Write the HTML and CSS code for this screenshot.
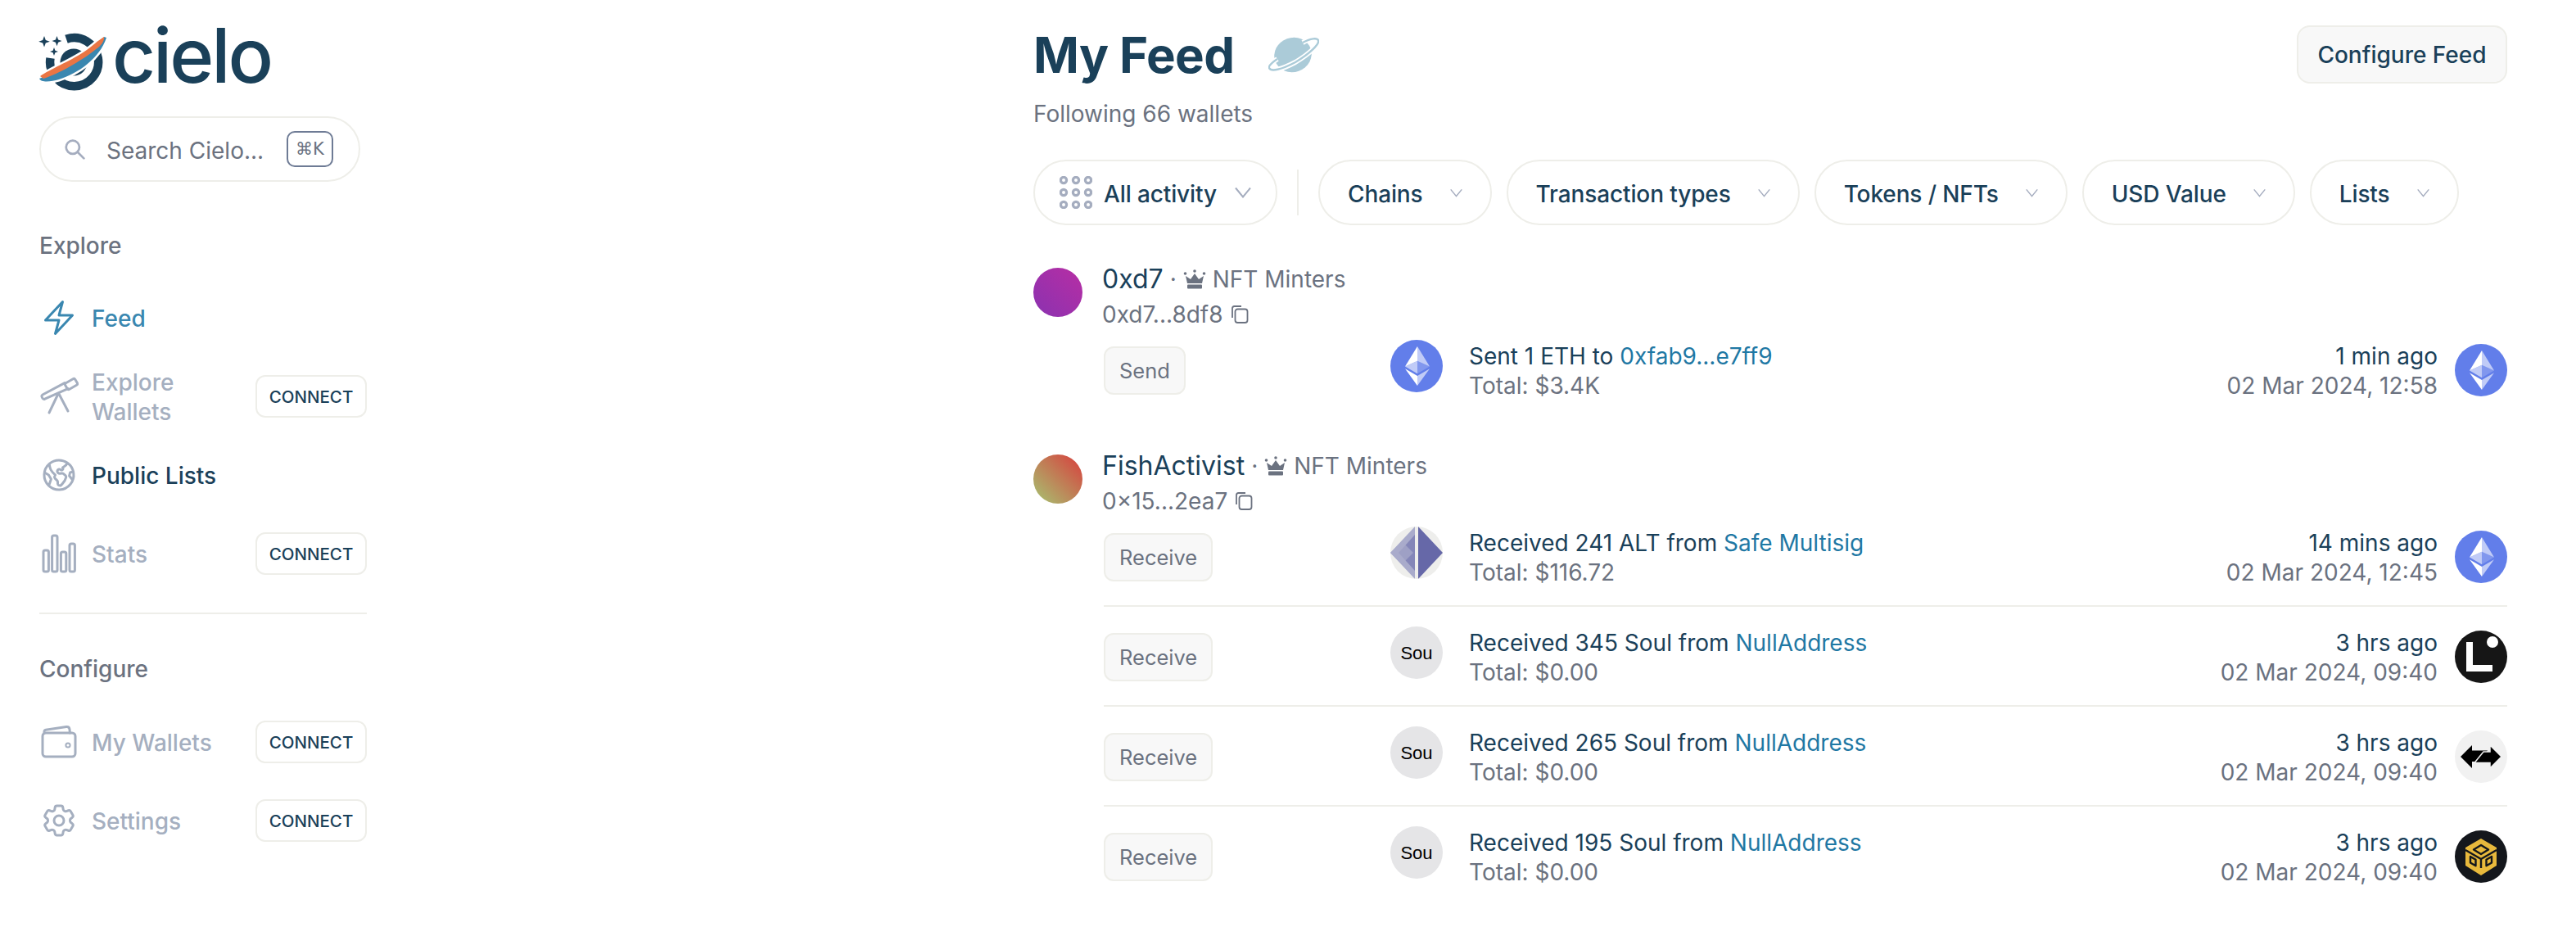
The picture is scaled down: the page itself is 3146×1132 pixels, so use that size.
FILE: index.html

```html
<!DOCTYPE html>
<html lang="en">
<head>
  <meta charset="UTF-8" />
  <title>Cielo - My Feed</title>
  <link rel="stylesheet" href="styles.css">
</head>
<body>
  <svg class="defs" width="0" height="0">
    <symbol id="eth" viewBox="0 0 32 32">
      <circle cx="16" cy="16" r="16" fill="#627eea"/>
      <path fill="#fff" fill-opacity=".6" d="M16.5 4v8.87l7.5 3.35z"/>
      <path fill="#fff" d="M16.5 4L9 16.22l7.5-3.35z"/>
      <path fill="#fff" fill-opacity=".6" d="M16.5 21.97V28L24 17.62z"/>
      <path fill="#fff" d="M16.5 28v-6.03L9 17.62z"/>
      <path fill="#fff" fill-opacity=".2" d="M16.5 20.57l7.5-4.35-7.5-3.35z"/>
      <path fill="#fff" fill-opacity=".6" d="M9 16.22l7.5 4.35v-7.7z"/>
    </symbol>
    <symbol id="chev" viewBox="0 0 20 14">
      <path d="M1 1.5l9 11 9-11" fill="none" stroke="#a5adbf" stroke-width="2"/>
    </symbol>
    <symbol id="copy" viewBox="0 0 22 22">
      <path d="M2 15V3.500Q2 1 4.500 1H13" fill="none" stroke="#6b7280" stroke-width="1.800"/>
      <rect x="5.500" y="4.500" width="15" height="16.500" rx="3" fill="none" stroke="#6b7280" stroke-width="1.800"/>
    </symbol>
    <symbol id="crown" viewBox="0 0 28 24">
      <circle cx="2.500" cy="5" r="1.800" fill="#6b7280"/>
      <circle cx="14" cy="2" r="1.800" fill="#6b7280"/>
      <circle cx="25.500" cy="5" r="1.800" fill="#6b7280"/>
      <path d="M3 8l6 4 5-7 5 7 6-4-2 9H5z" fill="#6b7280"/>
      <rect x="5" y="18.500" width="18" height="5" rx="1" fill="#6b7280"/>
    </symbol>
  </svg>

  <div class="page">
    <aside class="sidebar">
      <div class="logo">
        <svg class="logo-mark" viewBox="47 39 85 72">
          <path d="M61.500 70A29.500 29.500 0 1 0 81 46.800" fill="none" stroke="#1a4059" stroke-width="10.500"/>
          <circle cx="90" cy="75" r="16.500" fill="#1a4059"/>
          <path d="M48 95C50 100 62 99 72 96C95 89 122 70 130 45L127 44C120 48 112 56 103 62C85 74 60 84 49 92Z" fill="#fff" stroke="#fff" stroke-width="5"/>
          <path d="M48 95C50 100 62 99 72 96C95 89 122 70 130 45L127 44C118 58 90 76 53 93Z" fill="#3a87b0"/>
          <path d="M49 92C60 84 85 74 103 62C112 56 120 48 127 44C128 48 124 55 116 60C100 73 70 90 53 95Z" fill="#ea7544"/>
          <path d="M54 43l1.800 5 5 1.800-5 1.800-1.800 5-1.800-5-5-1.800 5-1.800zM69.500 43l1.600 4.500 4.400 1.600-4.400 1.600-1.600 4.500-1.600-4.500-4.400-1.600 4.400-1.600zM66 57l1.400 3.700 3.600 1.300-3.600 1.300-1.400 3.700-1.400-3.700-3.600-1.300 3.600-1.300z" fill="#1a4059"/>
        </svg>
        <span class="logo-text">cielo</span>
      </div>

      <div class="search">
        <svg class="search-icon" viewBox="0 0 24 24"><circle cx="10" cy="10" r="7.500" fill="none" stroke="#a5adbf" stroke-width="2.500"/><path d="M15.500 15.500l7 7" stroke="#a5adbf" stroke-width="2.500" stroke-linecap="round"/></svg>
        <span class="search-text">Search Cielo...</span>
        <span class="kbd">⌘K</span>
      </div>

      <div class="nav-title">Explore</div>
      <nav>
        <a class="nav-item active">
          <svg class="nav-icon" viewBox="0 0 24 24"><path d="M3.750 13.500l10.500-11.250L12 10.500h8.250L9.750 21.750 12 13.500H3.750z"/></svg>
          <span class="nav-label">Feed</span>
        </a>
        <a class="nav-item off">
          <svg class="nav-icon" viewBox="0 0 24 24"><rect x="-3.500" y="-2.200" width="7" height="4.400" rx="1" transform="translate(19.500 4.500) rotate(-30)"/><path d="M15.500 3.800L2 11a1 1 0 0 0-.4 1.400l.4.800a1 1 0 0 0 1.400.4L17.500 7.300"/><path d="M11.500 10.500L6 22M12 10.500L17.500 21"/></svg>
          <span class="nav-label">Explore Wallets</span>
          <span class="connect">CONNECT</span>
        </a>
        <a class="nav-item current">
          <svg class="nav-icon" viewBox="0 0 24 24"><path d="M6.115 5.190l.319 1.913A6 6 0 008.110 10.360L9.750 12l-.387.775c-.217.433-.132.956.210 1.298l1.348 1.348c.210.210.329.497.329.795v1.089c0 .426.240.815.622 1.006l.153.076c.433.217.956.132 1.298-.210l.723-.723a8.700 8.700 0 002.288-4.042 1.087 1.087 0 00-.358-1.099l-1.330-1.108c-.251-.210-.582-.299-.905-.245l-1.170.195a1.125 1.125 0 01-.980-.314l-.295-.295a1.125 1.125 0 010-1.591l.130-.132a1.125 1.125 0 011.300-.210l.603.302a.809.809 0 001.086-1.086L14.250 7.500l1.256-.837a4.500 4.500 0 001.528-1.732l.146-.292M6.115 5.190A9 9 0 1017.180 4.640M6.115 5.190A8.965 8.965 0 0112 3c1.929 0 3.716.607 5.180 1.640"/><path d="M3.200 10.500l2.500 1.500 1.500 2.500-1 3M20.800 10l-2 .5-.5 2 2 2.500"/></svg>
          <span class="nav-label">Public Lists</span>
        </a>
        <a class="nav-item off">
          <svg class="nav-icon" viewBox="0 0 24 24"><rect x="2.500" y="10" width="3.200" height="13" rx="1"/><rect x="7.800" y="1" width="3.200" height="22" rx="1"/><rect x="13.200" y="11" width="3.200" height="12" rx="1"/><rect x="18.500" y="6" width="3.200" height="17" rx="1"/></svg>
          <span class="nav-label">Stats</span>
          <span class="connect">CONNECT</span>
        </a>
      </nav>

      <hr class="nav-rule" />

      <div class="nav-title configure">Configure</div>
      <nav>
        <a class="nav-item off">
          <svg class="nav-icon" viewBox="0 0 24 24"><rect x="2" y="6.500" width="20" height="14.500" rx="2"/><path d="M3 6.500V5.800q0-1 1-1.200l12.500-1.800q1.800-.2 2 1.500l.2 2.200"/><circle cx="17.500" cy="14" r="1.300" stroke-width="1"/></svg>
          <span class="nav-label">My Wallets</span>
          <span class="connect">CONNECT</span>
        </a>
        <a class="nav-item off">
          <svg class="nav-icon" viewBox="0 0 24 24"><path d="M9.594 3.940c.090-.542.560-.940 1.110-.940h2.593c.550 0 1.020.398 1.110.940l.213 1.281c.063.374.313.686.645.870.074.040.147.083.220.127.324.196.720.257 1.075.124l1.217-.456a1.125 1.125 0 011.370.490l1.296 2.247a1.125 1.125 0 01-.260 1.431l-1.003.827c-.293.240-.438.613-.431.992a6.759 6.759 0 010 .255c-.007.378.138.750.430.990l1.005.828c.424.350.534.954.260 1.430l-1.298 2.247a1.125 1.125 0 01-1.369.491l-1.217-.456c-.355-.133-.750-.072-1.076.124a6.570 6.570 0 01-.220.128c-.331.183-.581.495-.644.869l-.213 1.280c-.090.543-.560.941-1.110.941h-2.594c-.550 0-1.020-.398-1.110-.940l-.213-1.281c-.062-.374-.312-.686-.644-.870a6.520 6.520 0 01-.220-.127c-.325-.196-.720-.257-1.076-.124l-1.217.456a1.125 1.125 0 01-1.369-.490l-1.297-2.247a1.125 1.125 0 01.260-1.431l1.004-.827c.292-.240.437-.613.430-.992a6.932 6.932 0 010-.255c.007-.378-.138-.750-.430-.990l-1.004-.828a1.125 1.125 0 01-.260-1.430l1.297-2.247a1.125 1.125 0 011.370-.491l1.216.456c.356.133.751.072 1.076-.124.072-.044.146-.087.220-.128.332-.183.582-.495.644-.869l.214-1.281z"/><circle cx="12" cy="12" r="3"/></svg>
          <span class="nav-label">Settings</span>
          <span class="connect">CONNECT</span>
        </a>
      </nav>
    </aside>

    <main class="content">
      <header class="head">
        <h1>My Feed</h1>
        <svg class="planet" viewBox="0 0 62 44">
          <ellipse cx="30" cy="22" rx="23" ry="21" fill="#abcbd8" transform="rotate(-20 30 22)"/>
          <path d="M42 7C52 1.500 60 1 61 4.500C62.500 9 50 21 33 31C16 40 3 43 1 38C0 35 5 31 11 27" fill="none" stroke="#fff" stroke-width="6"/>
          <path d="M42 7C52 1.500 60 1 61 4.500C62.500 9 50 21 33 31C16 40 3 43 1 38C0 35 5 31 11 27" fill="none" stroke="#abcbd8" stroke-width="2.500"/>
        </svg>
        <button class="configure-btn">Configure Feed</button>
      </header>
      <p class="following">Following 66 wallets</p>

      <div class="filters">
        <div class="pill all">
          <svg class="dots" viewBox="0 0 40 40">
            <g fill="none" stroke="#a5adbf" stroke-width="3.200">
              <circle cx="5" cy="5" r="3.600"/><circle cx="20" cy="5" r="3.600"/><circle cx="35" cy="5" r="3.600"/>
              <circle cx="5" cy="20" r="3.600"/><circle cx="20" cy="20" r="3.600"/><circle cx="35" cy="20" r="3.600"/>
              <circle cx="5" cy="35" r="3.600"/><circle cx="20" cy="35" r="3.600"/><circle cx="35" cy="35" r="3.600"/>
            </g>
          </svg>
          All activity
          <svg class="chev big"><use href="#chev"/></svg>
        </div>
        <span class="filter-rule"></span>
        <div class="pill">Chains<svg class="chev"><use href="#chev"/></svg></div>
        <div class="pill">Transaction types<svg class="chev"><use href="#chev"/></svg></div>
        <div class="pill">Tokens / NFTs<svg class="chev"><use href="#chev"/></svg></div>
        <div class="pill">USD Value<svg class="chev"><use href="#chev"/></svg></div>
        <div class="pill">Lists<svg class="chev"><use href="#chev"/></svg></div>
      </div>

      <section class="group first">
        <div class="wallet">
          <div class="avatar purple"></div>
          <div class="wallet-info">
            <div class="wallet-name">0xd7 <span class="sep">·</span> <svg class="crown"><use href="#crown"/></svg> <span class="list-name">NFT Minters</span></div>
            <div class="wallet-addr">0xd7...8df8 <svg class="copy"><use href="#copy"/></svg></div>
          </div>
        </div>
        <div class="rows">
          <div class="row">
            <div class="type"><span class="badge">Send</span></div>
            <svg class="token"><use href="#eth"/></svg>
            <div class="desc">
              <div>Sent 1 ETH to <a class="link">0xfab9...e7ff9</a></div>
              <div class="muted">Total: $3.4K</div>
            </div>
            <div class="when">
              <div>1 min ago</div>
              <div class="muted">02 Mar 2024, 12:58</div>
            </div>
            <svg class="chain"><use href="#eth"/></svg>
          </div>
        </div>
      </section>

      <section class="group">
        <div class="wallet">
          <div class="avatar fish"></div>
          <div class="wallet-info">
            <div class="wallet-name">FishActivist <span class="sep">·</span> <svg class="crown"><use href="#crown"/></svg> <span class="list-name">NFT Minters</span></div>
            <div class="wallet-addr">0×15...2ea7 <svg class="copy"><use href="#copy"/></svg></div>
          </div>
        </div>
        <div class="rows">
          <div class="row">
            <div class="type"><span class="badge">Receive</span></div>
            <svg class="token" viewBox="0 0 64 64">
              <defs><clipPath id="altclip"><circle cx="32" cy="32" r="32"/></clipPath></defs>
              <circle cx="32" cy="32" r="32" fill="#eeeeec"/>
              <g clip-path="url(#altclip)">
                <path d="M34 0L64 32 34 64z" fill="#6668a8"/>
                <path d="M30 0L0 32 30 64z" fill="#a9abcb"/>
                <path d="M30 10L10 32 30 54z" fill="#8486b8"/>
                <path d="M0 32L14 18 28 32 14 46z" fill="#a9abcb" opacity=".7"/>
              </g>
            </svg>
            <div class="desc">
              <div>Received 241 ALT from <a class="link">Safe Multisig</a></div>
              <div class="muted">Total: $116.72</div>
            </div>
            <div class="when">
              <div>14 mins ago</div>
              <div class="muted">02 Mar 2024, 12:45</div>
            </div>
            <svg class="chain"><use href="#eth"/></svg>
          </div>

          <div class="row">
            <div class="type"><span class="badge">Receive</span></div>
            <div class="token sou">Sou</div>
            <div class="desc">
              <div>Received 345 Soul from <a class="link">NullAddress</a></div>
              <div class="muted">Total: $0.00</div>
            </div>
            <div class="when">
              <div>3 hrs ago</div>
              <div class="muted">02 Mar 2024, 09:40</div>
            </div>
            <svg class="chain" viewBox="0 0 64 64">
              <circle cx="32" cy="32" r="32" fill="#161616"/>
              <path d="M14 14h8v28h24v8H14z" fill="#fff"/>
              <circle cx="46" cy="14" r="7" fill="#fff"/>
            </svg>
          </div>

          <div class="row">
            <div class="type"><span class="badge">Receive</span></div>
            <div class="token sou">Sou</div>
            <div class="desc">
              <div>Received 265 Soul from <a class="link">NullAddress</a></div>
              <div class="muted">Total: $0.00</div>
            </div>
            <div class="when">
              <div>3 hrs ago</div>
              <div class="muted">02 Mar 2024, 09:40</div>
            </div>
            <svg class="chain" viewBox="0 0 64 64">
              <circle cx="32" cy="32" r="32" fill="#f1f1f1"/>
              <path d="M7 32L21 18V24.500H40L29 38H21V46z" fill="#000"/>
              <path d="M57 32L43 18V26H35L24 39.500H43V46z" fill="#000" stroke="#f1f1f1" stroke-width="1.500"/>
            </svg>
          </div>

          <div class="row">
            <div class="type"><span class="badge">Receive</span></div>
            <div class="token sou">Sou</div>
            <div class="desc">
              <div>Received 195 Soul from <a class="link">NullAddress</a></div>
              <div class="muted">Total: $0.00</div>
            </div>
            <div class="when">
              <div>3 hrs ago</div>
              <div class="muted">02 Mar 2024, 09:40</div>
            </div>
            <svg class="chain" viewBox="0 0 64 64">
              <circle cx="32" cy="32" r="32" fill="#14171c"/>
              <path d="M32 10L51 21V43L32 55 13 43V21z" fill="#e8b93c"/>
              <g fill="none" stroke="#14171c" stroke-width="2.400" stroke-linejoin="round">
                <path d="M32 18L41 23.500 32 29 23 23.500zM13 24L32 35 51 24M32 35V46"/>
                <path d="M19 32l6.500 3.800v7.500L19 39.500zM45 32l-6.500 3.800v7.500L45 39.500z"/>
              </g>
            </svg>
          </div>
        </div>
      </section>
    </main>
  </div>
</body>
</html>
```

FILE: styles.css

```css
* {
  box-sizing: border-box;
}
body {
  margin: 0;
  background: #fff;
  color: #1a4059;
  font-family: Inter, "Liberation Sans", sans-serif;
  font-size: 28px;
  line-height: 36px;
}
.defs {
  display: block;
  height: 0;
}
.page {
  display: flex;
  justify-content: space-between;
  padding-left: 48px;
  padding-right: 84px;
  height: 1132px;
  overflow: hidden;
}

/* sidebar */
.sidebar {
  width: 400px;
  flex: none;
}
.logo {
  display: flex;
  align-items: flex-end;
  height: 112px;
  padding-top: 30px;
}
.logo-mark {
  width: 85px;
  height: 72px;
  margin-left: -1px;
  flex: none;
}
.logo-text {
  font-size: 92px;
  font-weight: 500;
  line-height: 72px;
  letter-spacing: -3px;
  margin-left: 5px;
  margin-bottom: 8px;
  height: 72px;
}
.search {
  display: flex;
  align-items: center;
  width: 392px;
  height: 80px;
  margin-top: 30px;
  border: 2px solid #eeeee9;
  border-radius: 40px;
  padding-left: 28px;
}
.search-icon {
  width: 26px;
  height: 26px;
}
.search-text {
  color: #6b7280;
  margin-left: 26px;
  padding-top: 3px;
  flex: 1;
}
.kbd {
  border: 2px solid #6e7b95;
  border-radius: 10px;
  width: 57px;
  height: 44px;
  font-size: 21px;
  line-height: 40px;
  text-align: center;
  color: #6b7280;
  margin-right: 31px;
  font-family: "DejaVu Sans", Inter, sans-serif;
}
.nav-title {
  color: #6b7280;
  font-weight: 500;
  margin-top: 60px;
  margin-bottom: 22px;
}
.nav-title.configure {
  margin-top: 49px;
  margin-bottom: 23px;
}
.nav-item {
  display: flex;
  align-items: center;
  height: 96px;
  font-weight: 500;
}
.nav-icon {
  width: 48px;
  height: 48px;
  flex: none;
  fill: none;
  stroke: #a5afc0;
  stroke-width: 1.500;
  stroke-linecap: round;
  stroke-linejoin: round;
}
.nav-label {
  margin-left: 16px;
  padding-top: 2px;
  flex: 1;
  max-width: 180px;
}
.nav-item.active {
  color: #3a87b0;
}
.nav-item.active .nav-icon {
  stroke: #3a87b0;
}
.nav-item.off .nav-label {
  color: #a5afc0;
}
.connect {
  margin-left: auto;
  width: 136px;
  height: 52px;
  border: 2px solid #eeeee9;
  border-radius: 12px;
  font-size: 20.500px;
  line-height: 50px;
  text-align: center;
  color: #1a4059;
}
.nav-rule {
  border: 0;
  border-top: 2px solid #eeeee9;
  margin: 24px 0 0;
}

/* main column */
.content {
  width: 1800px;
  flex: none;
  padding-top: 31px;
}
.head {
  display: flex;
  align-items: center;
  height: 71px;
}
h1 {
  margin: 0;
  font-size: 60px;
  line-height: 72px;
  font-weight: 700;
  letter-spacing: -.6px;
}
.planet {
  width: 62px;
  height: 44px;
  margin-left: 42px;
}
.configure-btn {
  margin-left: auto;
  width: 257px;
  height: 71px;
  border: 2px solid #eeeee9;
  border-radius: 16px;
  background: #f8f8f8;
  color: #1a4059;
  font: 500 28px/36px Inter, sans-serif;
  padding: 1px 0 0;
}
.following {
  margin: 17px 0 0;
  line-height: 40px;
  color: #6b7280;
}
.filters {
  display: flex;
  align-items: center;
  margin-top: 36px;
  gap: 18px;
}
.pill {
  display: flex;
  align-items: center;
  height: 80px;
  border: 2px solid #eeeee9;
  border-radius: 40px;
  padding: 3px 34px 0;
  font-weight: 500;
  letter-spacing: -.12px;
}
.pill.all {
  padding: 3px 30px 0;
}
.dots {
  width: 40px;
  height: 40px;
  margin-right: 14px;
  margin-top: -3px;
}
.chev {
  width: 15px;
  height: 11px;
  margin-left: 33px;
  margin-top: -3px;
}
.chev.big {
  width: 20px;
  height: 14px;
  margin-left: 22px;
}
.filter-rule {
  width: 2px;
  height: 56px;
  background: #eeeee9;
  margin: 0 6px;
}

/* wallets */
.group {
  margin-top: 44px;
}
.group.first {
  margin-top: 52px;
}
.wallet {
  display: flex;
  align-items: flex-start;
}
.avatar {
  width: 60px;
  height: 60px;
  border-radius: 50%;
  flex: none;
}
.avatar.purple {
  background: linear-gradient(45deg, #8a32b0, #b72ea4);
}
.avatar.fish {
  background: linear-gradient(45deg, #a5c572, #d93c3c);
}
.wallet-info {
  margin-left: 24px;
  margin-top: -4px;
}
.wallet-name {
  display: flex;
  align-items: center;
  gap: 8px;
  font-size: 32px;
  line-height: 36px;
}
.sep,
.list-name {
  font-size: 28px;
  color: #6b7280;
}
.crown {
  width: 28px;
  height: 24px;
}
.wallet-addr {
  display: flex;
  align-items: center;
  gap: 9px;
  margin-top: 7px;
  color: #6b7280;
}
.copy {
  width: 22px;
  height: 22px;
}
.rows {
  margin-left: 86px;
}
.row {
  display: flex;
  align-items: center;
  padding: 24px 0 22px;
  border-bottom: 2px solid #eeeee9;
}
.row:first-child {
  padding-top: 13px;
}
.row:last-child {
  border-bottom: 0;
}
.type {
  width: 350px;
  flex: none;
}
.badge {
  display: inline-block;
  height: 59px;
  padding: 0 17px;
  border: 2px solid #eeeee9;
  border-radius: 12px;
  background: #f8f8f8;
  color: #6b7280;
  font-size: 25.500px;
  line-height: 55px;
}
.token {
  width: 64px;
  height: 64px;
  flex: none;
  align-self: flex-start;
}
.sou {
  border-radius: 50%;
  background: #e5e5e7;
  color: #000;
  font: 22px/66px "Liberation Sans", sans-serif;
  text-align: center;
}
.desc {
  margin-left: 32px;
  padding-top: 2px;
  flex: 1;
}
.muted {
  color: #6b7280;
}
.link {
  color: #1f78a4;
}
.when {
  padding-top: 2px;
  text-align: right;
}
.chain {
  width: 64px;
  height: 64px;
  margin-left: 21px;
  flex: none;
}
```
